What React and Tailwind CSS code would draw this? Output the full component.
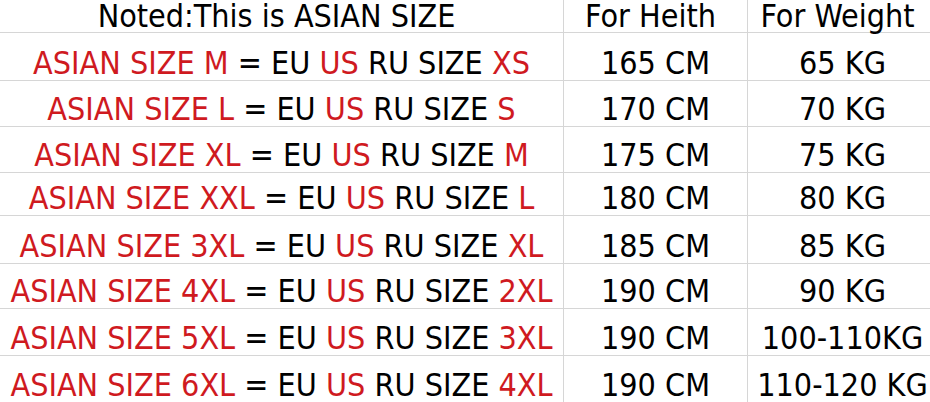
import React from "react";

const ROWS = [
  { asian: "M", eu: "XS", height: "165 CM", weight: "65 KG", h: "h-[48px]" },
  { asian: "L", eu: "S", height: "170 CM", weight: "70 KG", h: "h-[46px]" },
  { asian: "XL", eu: "M", height: "175 CM", weight: "75 KG", h: "h-[46px]" },
  { asian: "XXL", eu: "L", height: "180 CM", weight: "80 KG", h: "h-[43px]" },
  { asian: "3XL", eu: "XL", height: "185 CM", weight: "85 KG", h: "h-[48px]" },
  { asian: "4XL", eu: "2XL", height: "190 CM", weight: "90 KG", h: "h-[45px]" },
  { asian: "5XL", eu: "3XL", height: "190 CM", weight: "100-110KG", h: "h-[47px]" },
  { asian: "6XL", eu: "4XL", height: "190 CM", weight: "110-120 KG", h: "h-[47px]" },
];

const font = { fontFamily: '"DejaVu Sans Condensed", "DejaVu Sans", Verdana, sans-serif' };

export default function App() {
  return (
    <div className="w-[930px] h-[402px] overflow-hidden bg-white text-black" style={font}>
      <div className="w-[937px] text-[32px] whitespace-nowrap">
        {/* header, top is cropped in the picture */}
        <div className="grid grid-cols-[563px_184px_190px] h-[32px] leading-[32px]">
          <div className="flex items-end justify-center pr-[10px] pb-[1px]">Noted:This is ASIAN SIZE</div>
          <div className="flex items-end justify-center border-l border-[#d6d6d6] pr-[10px] pb-[1px]">For Heith</div>
          <div className="flex items-end justify-center border-l border-[#d6d6d6] pr-[10px] pb-[1px]">For Weight</div>
        </div>

        {ROWS.map((r) => (
          <div
            key={r.asian}
            className={`grid grid-cols-[563px_184px_190px] ${r.h} border-t border-[#d6d6d6] leading-[32px]`}
          >
            <div className="flex items-end justify-center pb-[1px]">
              <span className="text-[#cf1a1f]">ASIAN SIZE {r.asian}</span>
              <span className="whitespace-pre">{" = EU "}</span>
              <span className="text-[#cf1a1f]">US</span>
              <span className="whitespace-pre">{" RU SIZE "}</span>
              <span className="text-[#cf1a1f]">{r.eu}</span>
            </div>
            <div className="flex items-end justify-center border-l border-[#d6d6d6] pb-[1px]">{r.height}</div>
            <div className="flex items-end justify-center border-l border-[#d6d6d6] pb-[1px]">{r.weight}</div>
          </div>
        ))}
      </div>
    </div>
  );
}
